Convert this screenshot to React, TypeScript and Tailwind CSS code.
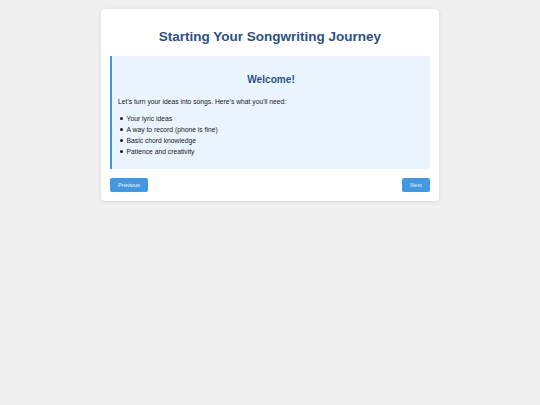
import React from "react";

const items = ["Your lyric ideas", "A way to record (phone is fine)", "Basic chord knowledge", "Patience and creativity"];

export default function App() {
  return (
    <div className="min-h-[405px] w-full bg-[#f0f0f0] pt-[9px]" style={{ fontFamily: '"Liberation Sans", Arial, sans-serif' }}>
      <div className="mx-auto w-[338px] rounded-[4px] bg-white p-[9px] shadow-[0_1px_4px_rgba(0,0,0,0.1)]">
        <h1 className="mt-[11px] mb-[11px] text-center text-[13.5px] leading-[16px] font-bold text-[#2c5282]">
          Starting Your Songwriting Journey
        </h1>
        <div className="rounded-r-[2px] border-l-2 border-[#4299e1] bg-[#eaf4fe] px-[6px] pt-[17px] pb-[12px] text-[6.75px] leading-[11px] text-[#1a1a1a]">
          <h2 className="mb-[9px] text-center text-[10.1px] leading-[14px] font-bold text-[#2c5282]">Welcome!</h2>
          <p className="mb-[6px]">Let's turn your ideas into songs. Here's what you'll need:</p>
          <ul className="pl-[2px]">
            {items.map((t) => (
              <li key={t} className="flex items-center">
                <span className="mr-[4px] h-[2.5px] w-[2.5px] rounded-full bg-[#1a1a1a]" />
                <span>{t}</span>
              </li>
            ))}
          </ul>
        </div>
        <div className="mt-[9px] flex justify-between">
          <button className="h-[14px] w-[38px] rounded-[2px] bg-[#4299e1] text-[5.6px] font-normal text-white/90">Previous</button>
          <button className="h-[14px] w-[28px] rounded-[2px] bg-[#4299e1] text-[5.6px] font-normal text-white/90">Next</button>
        </div>
      </div>
    </div>
  );
}
